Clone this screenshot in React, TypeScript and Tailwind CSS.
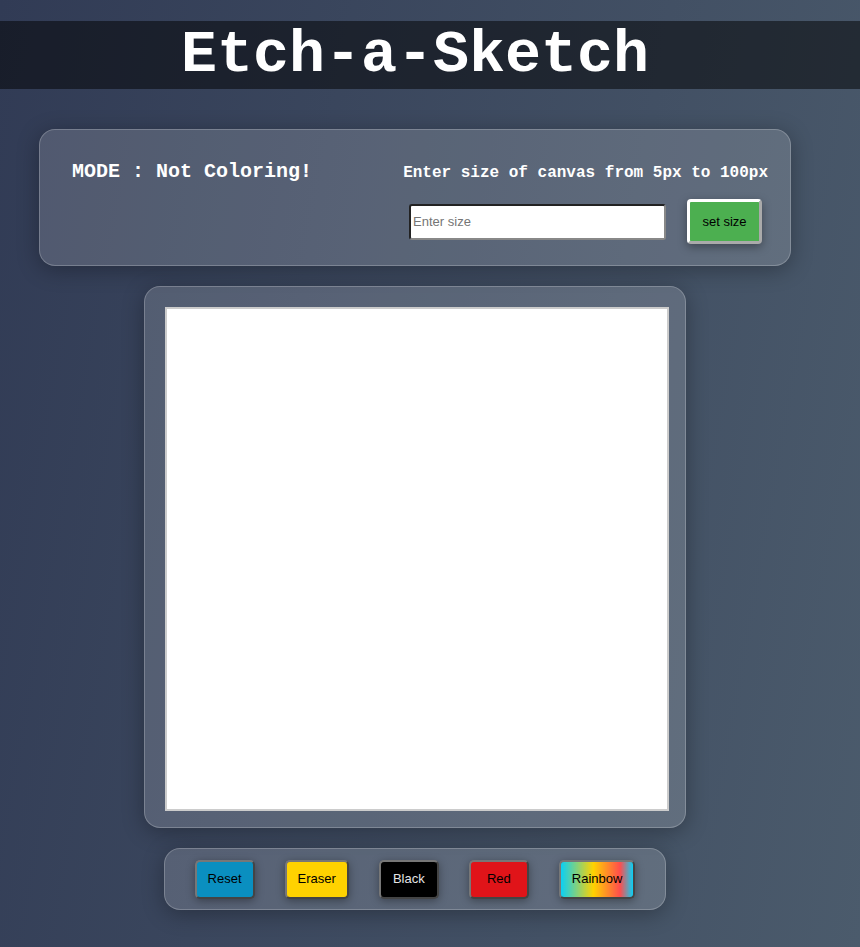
import React, { useState } from "react";

const colorButtons = [
  { name: "Reset", cls: "bg-[#0a8fc0] text-black" },
  { name: "Eraser", cls: "bg-[#ffd200] text-black" },
  { name: "Black", cls: "bg-black text-[#e5e5e5]" },
  { name: "Red", cls: "bg-[#e01419] text-black" },
  {
    name: "Rainbow",
    cls: "bg-[linear-gradient(90deg,#0ad0f5,#ffd200_45%,#ff4d4d_82%,#0ad0f5)] text-black",
  },
];

export default function App() {
  const [size, setSize] = useState("");

  return (
    <div className="min-h-[947px] w-full bg-[linear-gradient(100deg,#313b55,#4b5b6c)] font-['Liberation_Mono',monospace]">
      <div className="pt-[21px]">
        <div className="bg-[rgba(0,0,0,0.5)] h-[68px] flex items-center justify-center pr-[30px]">
          <h1 className="text-[60px] leading-[68px] font-bold text-white">Etch-a-Sketch</h1>
        </div>
      </div>

      <div className="w-[830px] flex flex-col items-center">
        <div className="mt-[40px] w-[752px] h-[137px] rounded-[16px] border border-[rgba(255,255,255,0.22)] bg-[rgba(255,255,255,0.15)] shadow-[0_4px_22px_rgba(0,0,0,0.3)] flex justify-between pl-[32px] pr-[22px]">
          <div className="pt-[30px] text-[20px] leading-[24px] font-bold text-white">MODE : Not Coloring!</div>
          <div className="pt-[33px] flex flex-col items-center">
            <div className="text-[16px] leading-[20px] font-bold text-white">Enter size of canvas from 5px to 100px</div>
            <div className="mt-[16px] flex items-center gap-[21px]">
              <input
                value={size}
                onChange={(e) => setSize(e.target.value)}
                placeholder="Enter size"
                className="w-[257px] h-[36px] bg-white rounded-[3px] border-2 border-t-[#222] border-l-[#222] border-b-[#888] border-r-[#888] px-[2px] text-[13px] font-['Liberation_Sans',sans-serif] text-black placeholder:text-[#757575] outline-none"
              />
              <button className="w-[75px] h-[45px] bg-[#4caf50] rounded-[4px] border-[3px] border-t-white border-l-white border-b-[#aaa] border-r-[#aaa] text-[13px] text-black font-['Liberation_Sans',sans-serif] shadow-[0_3px_10px_rgba(0,0,0,0.35)]">
                set size
              </button>
            </div>
          </div>
        </div>

        <div className="mt-[20px] w-[542px] h-[542px] rounded-[16px] border border-[rgba(255,255,255,0.22)] bg-[rgba(255,255,255,0.15)] shadow-[0_4px_22px_rgba(0,0,0,0.3)] p-[20px]">
          <div className="w-[504px] h-[504px] bg-white border-2 border-[#ccc]" />
        </div>

        <div className="mt-[20px] w-[502px] h-[62px] rounded-[16px] border border-[rgba(255,255,255,0.22)] bg-[rgba(255,255,255,0.15)] shadow-[0_4px_22px_rgba(0,0,0,0.3)] flex items-center justify-center gap-[30px]">
          {colorButtons.map((b) => (
            <button
              key={b.name}
              className={`min-w-[60px] h-[39px] px-[11px] rounded-[5px] border-2 border-solid border-t-[#777] border-l-[#777] border-b-[#444] border-r-[#444] text-[13px] font-['Liberation_Sans',sans-serif] shadow-[0_2px_8px_rgba(0,0,0,0.35)] ${b.cls}`}
            >
              {b.name}
            </button>
          ))}
        </div>
      </div>
    </div>
  );
}
